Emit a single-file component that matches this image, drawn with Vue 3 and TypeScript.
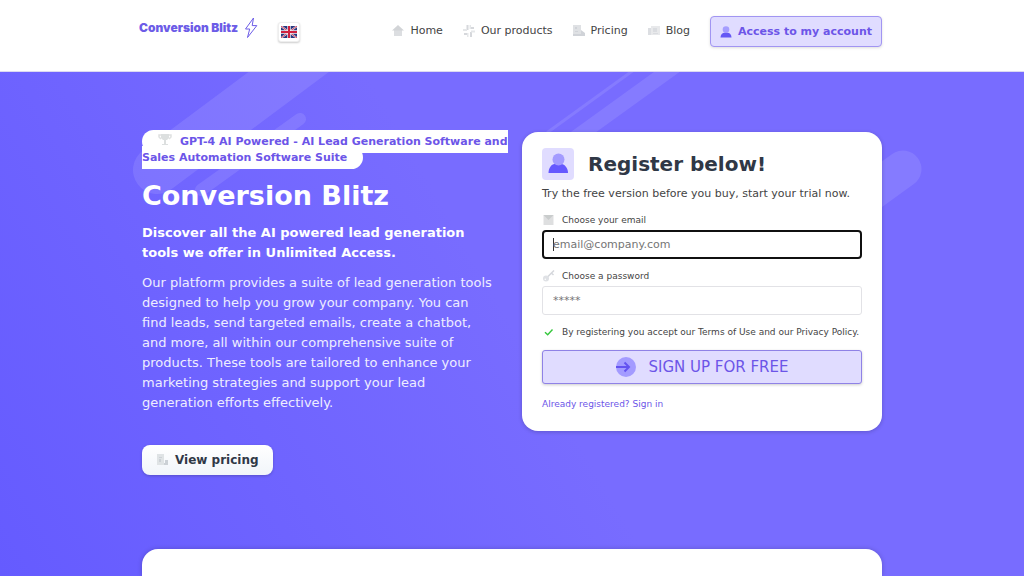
<script setup lang="ts">
import { onMounted, ref } from 'vue'

interface NavLink {
  label: string
  icon: 'home' | 'products' | 'pricing' | 'blog'
}

const links: NavLink[] = [
  { label: 'Home', icon: 'home' },
  { label: 'Our products', icon: 'products' },
  { label: 'Pricing', icon: 'pricing' },
  { label: 'Blog', icon: 'blog' },
]

const email = ref('')
const password = ref('')
const emailInput = ref<HTMLInputElement | null>(null)

onMounted(() => emailInput.value?.focus())
</script>

<template>
  <div class="page">
    <header class="header">
      <div class="container bar">
        <a class="logo" href="#">
          <span>Conversion Blitz</span>
          <svg class="bolt" viewBox="0 0 14 22" aria-hidden="true">
            <path d="M9.5 1 1.5 12h4.2L3.5 20.5 12.8 8.6H8.2z" />
          </svg>
        </a>
        <button class="language" type="button" aria-label="English">
          <svg viewBox="0 0 16 12" aria-hidden="true">
            <rect width="16" height="12" fill="#27377f" />
            <path d="M0 0 16 12M16 0 0 12" stroke="#e8e6f0" stroke-width="1.800" />
            <path d="M0 0 16 12M16 0 0 12" stroke="#d2304a" stroke-width="0.900" />
            <path d="M8 0v12M0 6h16" stroke="#f4eef2" stroke-width="3.400" />
            <path d="M8 0v12M0 6h16" stroke="#d0213f" stroke-width="2" />
          </svg>
        </button>
        <nav class="nav">
          <a v-for="link in links" :key="link.label" href="#">
            <svg class="nav-icon" viewBox="0 0 12 12" aria-hidden="true">
              <template v-if="link.icon === 'home'">
                <path d="M2 5h8v6H2z" fill="#dcdee1" />
                <path d="M6 0 12 5.500H0z" fill="#d2d4d7" />
              </template>
              <template v-else-if="link.icon === 'products'">
                <path d="M3.500 0h2v5h-2zM7 2h4v2H7zM7 7h2v5H7zM1 8h4v2H1z" fill="#d6d8dc" />
                <path d="M0 4h4v2H0zM6.500 0h1.500v4H6.500zM8 5.500h4v2H8zM4 8h1.500v4H4z" fill="#e5e7e9" />
              </template>
              <template v-else-if="link.icon === 'pricing'">
                <path d="M0 0h8v11H0z" fill="#dfe1e4" />
                <path d="M2 2h2v2H2zM2 6h3v1H2zM8 5l4 3v3H8zM0 9h8v2H0z" fill="#d0d3d8" />
              </template>
              <template v-else>
                <path d="M0 3h3v7H0z" fill="#dcdee2" />
                <path d="M3 1h9v9H3z" fill="#e8e9eb" />
                <path d="M5 3h4v4H5zM5 8h5v1H5z" fill="#dadce0" />
              </template>
            </svg>
            {{ link.label }}
          </a>
        </nav>
        <a class="account" href="#">
          <svg viewBox="0 0 12 12" aria-hidden="true">
            <circle cx="6" cy="3.500" r="3.300" fill="#a59dff" />
            <path d="M0.500 11.500c0-3 2-4.700 4-4.700h3c2 0 4 1.700 4 4.700z" fill="#6558f5" />
          </svg>
          Access to my account
        </a>
      </div>
    </header>

    <main class="hero">
      <svg class="streaks" viewBox="0 0 1024 505" aria-hidden="true">
        <g fill="none" stroke="#fff" stroke-opacity="0.1" stroke-linecap="round">
          <path d="M157 98 333-33" stroke-width="48" />
          <path d="M201 118 300 47" stroke-width="12" />
          <path d="M548 60 660-21" stroke-width="3" />
          <path d="M560 77 700-24" stroke-width="15" />
          <path d="M903 97 780 186" stroke-width="37" />
        </g>
      </svg>
      <div class="container columns">
        <section class="intro">
          <p class="badge-line">
            <span class="badge"><svg viewBox="0 0 14 12" aria-hidden="true">
              <path d="M3 1H1v2l2 2M11 1h2v2l-2 2" fill="none" stroke="#dfe1e1" stroke-width="1.500" />
              <path d="M3 0h8v4L9 6H5L3 4zM6 6h2v4H6zM4 10h6v1H4z" fill="#dcdfdf" />
            </svg>GPT-4 AI Powered - AI Lead Generation Software and Sales Automation Software Suite</span>
          </p>
          <h1>Conversion Blitz</h1>
          <h2>Discover all the AI powered lead generation tools we offer in Unlimited Access.</h2>
          <p class="description">
            Our platform provides a suite of lead generation tools designed to help you grow your
            company. You can find leads, send targeted emails, create a chatbot, and more, all
            within our comprehensive suite of products. These tools are tailored to enhance your
            marketing strategies and support your lead generation efforts effectively.
          </p>
          <a class="pricing" href="#">
            <svg viewBox="0 0 12 12" aria-hidden="true">
              <path d="M1 0h7v11H1z" fill="#dfe3e5" />
              <path d="M3 3h3v1H3zM3 5h2v3H3zM9 6h3v5H8V9h1z" fill="#ccd1d6" />
            </svg>
            View pricing
          </a>
        </section>

        <form class="card" @submit.prevent>
          <div class="card-title">
            <svg viewBox="0 0 32 32" aria-hidden="true">
              <rect width="32" height="32" rx="4" fill="#e0dcff" />
              <path d="M6.500 25c0-5 3-9 6-9h7c3 0 6.500 4 6.500 9z" fill="#6558ff" />
              <circle cx="16.500" cy="11.500" r="6" fill="#a39bff" />
            </svg>
            <h2>Register below!</h2>
          </div>
          <p class="lead">Try the free version before you buy, start your trial now.</p>

          <label for="email">
            <svg viewBox="0 0 12 12" aria-hidden="true">
              <path d="M1 1h10v10H1z" fill="#dedfe0" />
              <path d="M1 1h10L6 6z" fill="#c9cccc" />
            </svg>
            Choose your email
          </label>
          <input id="email" ref="emailInput" v-model="email" type="email" placeholder="email@company.com" />

          <label for="password">
            <svg viewBox="0 0 12 12" aria-hidden="true">
              <path d="M4 8 11.500 0.500M9 3l2 2" fill="none" stroke="#d5d7dc" stroke-width="1.500" />
              <circle cx="3.500" cy="8.500" r="3" fill="#dfe1e5" />
              <circle cx="2.800" cy="9.300" r="0.800" fill="#fff" />
            </svg>
            Choose a password
          </label>
          <input id="password" v-model="password" type="password" placeholder="*****" />

          <p class="terms">
            <svg viewBox="0 0 12 12" aria-hidden="true">
              <path d="m2.500 6.200 2.700 2.600L10 3.500" fill="none" stroke="#35c73c" stroke-width="1.400" />
            </svg>
            By registering you accept our Terms of Use and our Privacy Policy.
          </p>
          <button class="submit" type="submit">
            <svg viewBox="0 0 20 20" aria-hidden="true">
              <circle cx="10" cy="10" r="10" fill="#a39bff" />
              <path d="M0 10h13M8.500 5.500 13 10l-4.500 4.500" fill="none" stroke="#6352f0" stroke-width="2" />
            </svg>
            SIGN UP FOR FREE
          </button>
          <a class="signin" href="#">Already registered? Sign in</a>
        </form>
      </div>
      <section class="container panel"></section>
    </main>
  </div>
</template>

<style>
html,
body,
#app {
  height: 100%;
}

body {
  margin: 0;
  overflow-x: hidden;
}
</style>

<style scoped>
.page {
  display: flex;
  flex-direction: column;
  min-height: 100%;
  font-family: 'DejaVu Sans', Verdana, sans-serif;
  font-size: 11px;
  color: #444;
}

.page * {
  box-sizing: border-box;
}

a {
  color: inherit;
  text-decoration: none;
}

h1,
h2,
p {
  margin: 0;
}

svg {
  flex: none;
}

.container {
  width: calc(100% - 40px);
  max-width: 740px;
  margin: 0 auto;
}

.header {
  padding: 16px 0 23px;
  background: #fff;
  border-bottom: 1px solid #dcdaf0;
}

.bar {
  display: flex;
  align-items: flex-start;
}

.logo {
  display: flex;
  align-items: center;
  gap: 6px;
  margin-left: -3px;
  font: 900 12px/24px Inter, 'Open Sans', sans-serif;
  color: #6c5ce7;
}

.bolt {
  width: 14px;
  height: 24px;
  fill: none;
  stroke: #6c5ce7;
  stroke-width: 1;
  stroke-linejoin: round;
}

.language {
  display: flex;
  align-items: center;
  justify-content: center;
  width: 22px;
  height: 20px;
  margin: 6px 0 0 20px;
  padding: 0;
  background: #fff;
  border: 1px solid #eee;
  border-radius: 3px;
  box-shadow: 0 1px 2px #0003;
}

.language svg {
  width: 16px;
  height: 12px;
}

.nav {
  display: flex;
  gap: 20px;
  margin-left: auto;
}

.nav a {
  display: flex;
  align-items: center;
  gap: 6px;
  line-height: 30px;
}

.nav-icon {
  width: 12px;
  height: 12px;
}

.account {
  display: flex;
  align-items: center;
  gap: 6px;
  height: 31px;
  margin-bottom: 1px;
  margin-left: 20px;
  padding: 0 9px;
  font-weight: bold;
  line-height: 29px;
  color: #6c55e8;
  background: #e0dcff;
  border: 1px solid #a195f2;
  border-radius: 4px;
  box-shadow: 0 1px 3px #0002;
}

.account svg {
  width: 12px;
  height: 12px;
}

.hero {
  position: relative;
  display: flex;
  flex: 1;
  flex-direction: column;
  background: linear-gradient(60deg, #655bff, #786cff 50%);
}

.streaks {
  position: absolute;
  top: 0;
  left: 50%;
  width: 1024px;
  height: 505px;
  transform: translateX(-50%);
}

.columns {
  position: relative;
  display: grid;
  grid-template-columns: 1fr 1fr;
  gap: 20px;
  align-items: start;
  padding: 60px 0 74px;
}

.badge-line {
  margin-right: -10px;
  padding-top: 2px;
  line-height: 16px;
}

.badge {
  padding: 5px 16px;
  font-weight: bold;
  color: #6c55e8;
  background: #fff;
  border-radius: 12px;
}

.badge svg {
  width: 14px;
  height: 12px;
  margin-right: 8px;
  vertical-align: -1px;
}

h1 {
  margin-top: 12px;
  font-size: 27px;
  line-height: 36px;
  color: #fff;
}

.intro h2 {
  margin-top: 9px;
  font-size: 13px;
  line-height: 20px;
  color: #fff;
}

.description {
  max-width: 352px;
  margin-top: 10px;
  font-size: 13px;
  line-height: 20px;
  color: #eeedff;
}

.pricing {
  display: inline-flex;
  align-items: center;
  gap: 7px;
  height: 30px;
  margin-top: 32px;
  padding: 0 14px;
  font-size: 12px;
  font-weight: bold;
  color: #303846;
  background: linear-gradient(#fff, #f1f5fa);
  border-radius: 8px;
  box-shadow: 0 1px 3px #0003;
}

.pricing svg {
  width: 12px;
  height: 12px;
}

.card {
  display: flex;
  flex-direction: column;
  padding: 16px 20px 19px;
  background: #fff;
  border-radius: 16px;
  box-shadow: 0 1px 4px #0003;
}

.card-title {
  display: flex;
  align-items: center;
  gap: 14px;
}

.card-title svg {
  width: 32px;
  height: 32px;
}

.card-title h2 {
  font-size: 20px;
  line-height: 32px;
  color: #303846;
}

.lead {
  margin: 6px 0 9px;
  line-height: 16px;
}

label,
.terms {
  display: flex;
  align-items: center;
  gap: 7px;
  font-size: 9px;
  line-height: 18px;
}

label svg,
.terms svg {
  width: 13px;
  height: 12px;
}

input {
  width: 100%;
  height: 29px;
  margin: 1px 0 8px;
  padding: 0 10px;
  font: inherit;
  color: #333;
  background: #fff;
  border: 1px solid #e2e2e6;
  border-radius: 3px;
}

input::placeholder {
  color: #757575;
}

input:focus {
  padding: 0 9px;
  border: 2px solid #101010;
  border-radius: 4px;
  outline: none;
}

input:focus:placeholder-shown {
  caret-color: transparent;
  background: linear-gradient(#333, #333) 9px center / 1px 13px no-repeat #fff;
}

.submit {
  display: flex;
  align-items: center;
  justify-content: center;
  gap: 13px;
  height: 34px;
  margin-top: 9px;
  font: inherit;
  font-size: 15px;
  color: #6c55e8;
  background: #e0dcff;
  border: 1px solid #8f82e6;
  border-radius: 3px;
  box-shadow: 0 1px 3px #0003;
}

.submit svg {
  width: 20px;
  height: 20px;
}

.signin {
  align-self: flex-start;
  margin-top: 12px;
  font-size: 9px;
  line-height: 16px;
  color: #6c55e8;
}

.panel {
  position: relative;
  flex: 1;
  background: #fff;
  border-radius: 16px 16px 0 0;
  box-shadow: 0 0 5px #0003;
}
</style>
